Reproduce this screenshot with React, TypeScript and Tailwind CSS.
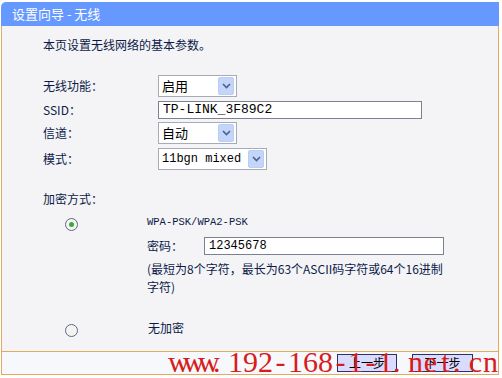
import type { ReactNode } from "react";

const font = "font-['Liberation_Mono','Noto_Sans_CJK_SC',monospace]";
const cjk = "font-['Noto_Sans_CJK_SC',sans-serif]";
const watermark = "www.192-168-1-1.net.cn".split("");

function Chevron() {
  return (
    <svg width="9" height="6" viewBox="0 0 9 6" aria-hidden>
      <path d="M1 1 L4.5 4.5 L8 1" fill="none" stroke="#4d6185" strokeWidth="1.6" />
    </svg>
  );
}

function Select({ value, width, mono }: { value: string; width: string; mono?: boolean }) {
  return (
    <div className={`flex h-[22px] items-center border border-[#a5acb5] bg-white pl-[3px] pr-[2px] ${width}`}>
      <span className={`flex-1 text-black ${mono ? "text-[12px]" : `text-[13px] ${cjk}`}`}>{value}</span>
      <span className="flex h-[18px] w-[16px] items-center justify-center rounded-[2px] border border-[#b9cdf5] bg-[#c4d5fb]">
        <Chevron />
      </span>
    </div>
  );
}

function Input({ value, width, size }: { value: string; width: string; size: string }) {
  return (
    <div className={`flex h-[18px] items-center border border-[#7a8290] bg-white pl-[4px] text-black ${size} ${width}`}>
      {value}
    </div>
  );
}

function Row({ label, children, className = "" }: { label: string; children: ReactNode; className?: string }) {
  return (
    <div className={`flex items-center ${className}`}>
      <span className={`w-[115px] text-[12px] ${cjk}`}>{label}</span>
      {children}
    </div>
  );
}

function Radio({ checked }: { checked?: boolean }) {
  return (
    <span className="flex h-[13px] w-[13px] items-center justify-center rounded-full border border-[#5a6b80] bg-[#f4f5f2]">
      {checked && <span className="h-[5px] w-[5px] rounded-full bg-[#3fa83a]" />}
    </span>
  );
}

export default function App() {
  return (
    <div className={`relative h-[378px] w-[502px] bg-white pl-[1px] pt-[2px] ${font}`}>
      <div className="w-[498px]">
        <div className={`flex h-[24px] items-center rounded-tl-[5px] bg-[#6699ff] pl-[11px] text-[13px] text-white ${cjk}`}>
          设置向导 - 无线
        </div>
        <div className="h-[325px] border-x border-[#e2aa5c] bg-[#f4f4f6] pl-[41px] pt-[11px] text-[#0c1a48]">
          <p className={`h-[16px] text-[12px] leading-[16px] ${cjk}`}>本页设置无线网络的基本参数。</p>
          <Row label="无线功能：" className="mt-[22px] h-[22px]">
            <Select value="启用" width="w-[79px]" />
          </Row>
          <Row label="SSID：" className="mt-[4px] h-[18px]">
            <Input value="TP-LINK_3F89C2" width="w-[264px]" size="text-[13px]" />
          </Row>
          <Row label="信道：" className="mt-[3px] h-[22px]">
            <Select value="自动" width="w-[79px]" />
          </Row>
          <Row label="模式：" className="mt-[4px] h-[22px]">
            <Select value="11bgn mixed" width="w-[109px]" mono />
          </Row>
          <p className={`mt-[21px] h-[16px] text-[12px] leading-[16px] ${cjk}`}>加密方式：</p>
          <div className="mt-[8px] flex h-[16px] items-center">
            <span className="ml-[22px] mt-[3px] w-[82px]">
              <Radio checked />
            </span>
            <span className="text-[10.5px]">WPA-PSK/WPA2-PSK</span>
          </div>
          <div className="mt-[6px] flex h-[18px] items-center pl-[104px]">
            <span className={`w-[57px] text-[12px] ${cjk}`}>密码：</span>
            <Input value="12345678" width="w-[240px]" size="text-[12px]" />
          </div>
          <p className={`mt-[5px] pl-[104px] text-[12px] leading-[18px] ${cjk}`}>
            (最短为8个字符，最长为63个ASCII码字符或64个16进制
            <br />
            字符)
          </p>
          <div className="mt-[24px] flex h-[16px] items-center">
            <span className="ml-[22px] mt-[4px] w-[83px]">
              <Radio />
            </span>
            <span className={`text-[12px] ${cjk}`}>无加密</span>
          </div>
        </div>
        <div className="flex h-[24px] items-center border border-[#e2aa5c] bg-[#f6f8fc] pl-[335px]">
          <button className={`h-[18px] w-[60px] border border-[#2e2f63] bg-[#d9dcff] text-[12px] leading-none text-black ${cjk}`}>
            上一步
          </button>
          <button className={`ml-[15px] h-[18px] w-[61px] border border-[#2e2f63] bg-[#d9dcff] text-[12px] leading-none text-black ${cjk}`}>
            下一步
          </button>
        </div>
      </div>
      <div className="pointer-events-none absolute left-[168px] top-[347px] flex h-[30px] font-['Liberation_Serif',serif] text-[30px] leading-none text-[#d61c1c]">
        {watermark.map((c, i) => (
          <span key={i} className={`w-[15px] ${c === "." ? "text-left" : "text-center"}`}>
            {c}
          </span>
        ))}
      </div>
    </div>
  );
}
